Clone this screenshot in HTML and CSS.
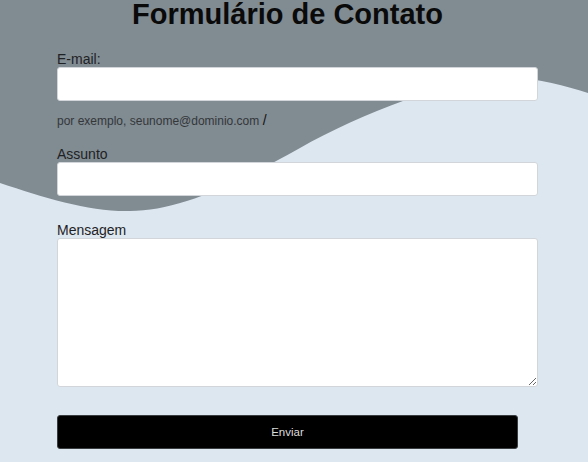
FILE: index.html
```html
<!DOCTYPE html>
<html lang="pt-BR">
<head>
<meta charset="utf-8">
<title>Formulário de Contato</title>
<link rel="stylesheet" href="styles.css">
</head>
<body>
<main class="contact">
  <h1 class="title">Formulário de Contato</h1>
  <form class="form">
    <label class="label" for="email">E-mail:</label>
    <input class="field" type="email" id="email">
    <p class="hint">por exemplo, seunome@dominio.com <span class="hint-sep">/</span></p>
    <label class="label" for="assunto">Assunto</label>
    <input class="field" type="text" id="assunto">
    <label class="label label-msg" for="mensagem">Mensagem</label>
    <textarea class="field area" id="mensagem"></textarea>
    <button class="submit" type="button">Enviar</button>
  </form>
</main>
</body>
</html>
```
FILE: styles.css
```css
html, body {
  margin: 0;
  padding: 0;
}

body {
  min-height: 462px;
  background: #dde7f0 url("data:image/svg+xml,%3Csvg xmlns='http://www.w3.org/2000/svg' width='588' height='462' viewBox='0 0 588 462'%3E%3Cpath fill='%23818b92' d='M0 0H588V93C565 86 540 78 510 78C450 78 360 114 300 148C225 190 175 211 130 211C90 212 45 198 0 183Z'/%3E%3C/svg%3E") no-repeat 0 0;
  font-family: "Liberation Sans", Arial, sans-serif;
  color: #1f2224;
}

.contact {
  width: 461px;
  margin-left: 57px;
}

.title {
  margin: 0 0 22px;
  font-size: 29px;
  line-height: 29px;
  font-weight: bold;
  text-align: center;
  color: #0a0a0a;
}

.form {
  margin: 0;
}

.label {
  display: block;
  font-size: 14px;
  line-height: 16px;
  color: #1f2224;
}

.label-msg {
  margin-top: 26px;
}

.field {
  display: block;
  box-sizing: content-box;
  width: 461px;
  height: 32px;
  margin: 0;
  padding: 0 9px;
  border: 1px solid #d2d6da;
  border-radius: 3px;
  background: #fff;
  font-family: inherit;
  font-size: 14px;
}

.area {
  height: 147px;
  resize: both;
}

.hint {
  margin: 12px 0 18px;
  font-size: 12px;
  line-height: 14px;
  color: #33373a;
}

.hint-sep {
  font-size: 14px;
  color: #111;
}

.submit {
  display: block;
  width: 461px;
  height: 34px;
  margin-top: 28px;
  padding: 0;
  border: 1px solid #3a3d40;
  border-radius: 3px;
  background: #000;
  color: #dcdcdc;
  font-family: inherit;
  font-size: 11.5px;
  text-align: center;
}
```
